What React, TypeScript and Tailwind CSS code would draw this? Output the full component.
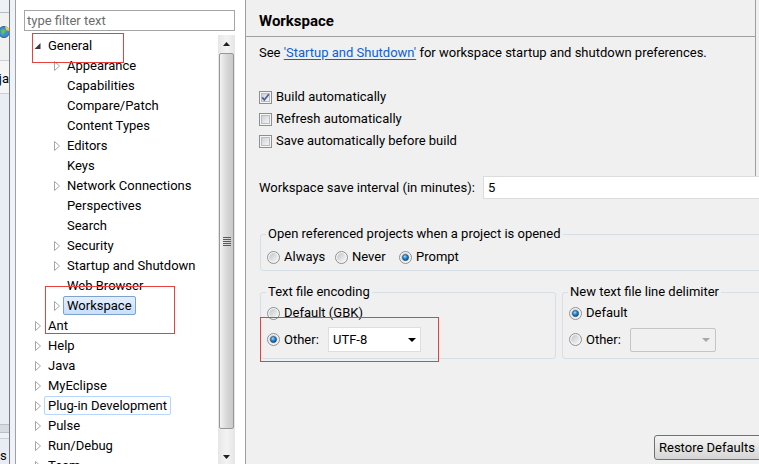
import React from "react";

type TreeNode = {
  label: string;
  depth: 0 | 1;
  arrow: "none" | "closed" | "open";
  state?: "selected" | "focus";
};

const tree: TreeNode[] = [
  { label: "General", depth: 0, arrow: "open" },
  { label: "Appearance", depth: 1, arrow: "closed" },
  { label: "Capabilities", depth: 1, arrow: "none" },
  { label: "Compare/Patch", depth: 1, arrow: "none" },
  { label: "Content Types", depth: 1, arrow: "none" },
  { label: "Editors", depth: 1, arrow: "closed" },
  { label: "Keys", depth: 1, arrow: "none" },
  { label: "Network Connections", depth: 1, arrow: "closed" },
  { label: "Perspectives", depth: 1, arrow: "none" },
  { label: "Search", depth: 1, arrow: "none" },
  { label: "Security", depth: 1, arrow: "closed" },
  { label: "Startup and Shutdown", depth: 1, arrow: "closed" },
  { label: "Web Browser", depth: 1, arrow: "none" },
  { label: "Workspace", depth: 1, arrow: "closed", state: "selected" },
  { label: "Ant", depth: 0, arrow: "closed" },
  { label: "Help", depth: 0, arrow: "closed" },
  { label: "Java", depth: 0, arrow: "closed" },
  { label: "MyEclipse", depth: 0, arrow: "closed" },
  { label: "Plug-in Development", depth: 0, arrow: "closed", state: "focus" },
  { label: "Pulse", depth: 0, arrow: "closed" },
  { label: "Run/Debug", depth: 0, arrow: "closed" },
  { label: "Team", depth: 0, arrow: "closed" },
];

function Arrow({ kind }: { kind: TreeNode["arrow"] }) {
  return (
    <span className="h-[20px] w-[13px] shrink-0">
      {kind === "closed" && (
        <svg width="13" height="20" viewBox="0 0 13 20">
          <path d="M4.5 6.5 L9.5 11 L4.5 15.5 Z" fill="#fff" stroke="#a6a6a6" />
        </svg>
      )}
      {kind === "open" && (
        <svg width="13" height="20" viewBox="0 0 13 20">
          <path d="M9.5 8 L9.5 14 L3.5 14 Z" fill="#3a3a3a" />
        </svg>
      )}
    </span>
  );
}

function TreeRow({ node }: { node: TreeNode }) {
  const label =
    node.state === "selected"
      ? "border-[#7da2ce] bg-gradient-to-b from-[#e4effd] to-[#c8dffc]"
      : node.state === "focus"
        ? "border-[#b8d6fb] bg-[#fbfdff]"
        : "border-transparent";
  return (
    <div className={`flex h-[20px] shrink-0 items-center ${node.depth === 0 ? "pl-[15px]" : "pl-[34px]"}`}>
      <Arrow kind={node.arrow} />
      <span className={`h-[19px] whitespace-nowrap rounded-[2px] border px-[3px] leading-[17px] ${label}`}>
        {node.label}
      </span>
    </div>
  );
}

function Scrollbar() {
  return (
    <div className="flex w-[17px] shrink-0 flex-col bg-gradient-to-r from-[#e6e6e6] via-[#f3f3f3] to-[#e6e6e6]">
      <div className="flex h-[18px] items-center justify-center">
        <svg width="7" height="4" viewBox="0 0 7 4">
          <path d="M0 4 L3.5 0 L7 4 Z" fill="#202020" />
        </svg>
      </div>
      <div className="mx-[1px] flex h-[376px] items-center justify-center rounded-[2px] border border-[#979797] bg-gradient-to-r from-[#f2f2f2] via-[#d9d9d9] to-[#c9c9c9]">
        <svg width="8" height="9" viewBox="0 0 8 9">
          <path d="M0 0.5 H8 M0 2.5 H8 M0 4.5 H8 M0 6.5 H8 M0 8.5 H8" stroke="#5a5a5a" strokeWidth="1" />
        </svg>
      </div>
      <div className="flex flex-1 items-end justify-center pb-[5px]">
        <svg width="7" height="4" viewBox="0 0 7 4">
          <path d="M0 0 L7 0 L3.5 4 Z" fill="#202020" />
        </svg>
      </div>
    </div>
  );
}

function Check({ on }: { on?: boolean }) {
  return (
    <svg width="13" height="13" viewBox="0 0 13 13" className="shrink-0">
      <defs>
        <linearGradient id="cbfill" x1="0" y1="0" x2="1" y2="1">
          <stop offset="0" stopColor="#cbcfd5" />
          <stop offset="1" stopColor="#f7f7f7" />
        </linearGradient>
      </defs>
      <rect x="0.5" y="0.5" width="12" height="12" fill="#f6f6f6" stroke="#8e8f8f" />
      <rect x="2.5" y="2.5" width="8" height="8" fill="url(#cbfill)" stroke="#b9bdc3" />
      {on && <path d="M3.2 6.4 L5.3 9 L9.8 3.2" fill="none" stroke="#4a5f97" strokeWidth="1.7" />}
    </svg>
  );
}

function Radio({ on }: { on?: boolean }) {
  return (
    <svg width="13" height="13" viewBox="0 0 13 13" className="shrink-0">
      <defs>
        <linearGradient id="rdfill" x1="0" y1="0" x2="1" y2="1">
          <stop offset="0" stopColor="#c2c6cc" />
          <stop offset="1" stopColor="#f7f7f7" />
        </linearGradient>
        <radialGradient id="rddot" cx="0.4" cy="0.35" r="0.75">
          <stop offset="0" stopColor="#9fe0ff" />
          <stop offset="0.45" stopColor="#1d86d6" />
          <stop offset="1" stopColor="#0b3f78" />
        </radialGradient>
      </defs>
      <circle cx="6.5" cy="6.5" r="6" fill="#f4f4f4" stroke="#8e8f8f" />
      <circle cx="6.5" cy="6.5" r="4.4" fill="url(#rdfill)" />
      {on && <circle cx="6.5" cy="6.5" r="3.1" fill="url(#rddot)" stroke="#1f3f66" strokeWidth="0.6" />}
    </svg>
  );
}

function RadioItem({ label, on, className = "" }: { label: string; on?: boolean; className?: string }) {
  return (
    <div className={`flex items-center ${className}`}>
      <span className="ml-[1px] flex">
        <Radio on={on} />
      </span>
      <span className="ml-[4px] whitespace-nowrap leading-[16px]">{label}</span>
    </div>
  );
}

function CheckRow({ label, on }: { label: string; on?: boolean }) {
  return (
    <div className="flex h-[22px] items-center pl-[13px]">
      <Check on={on} />
      <span className="ml-[4px] leading-[16px]">{label}</span>
    </div>
  );
}

function LeftStrip() {
  return (
    <div className="flex w-[9px] shrink-0 flex-col overflow-hidden bg-[#e8edf3]">
      <div className="h-[13px] shrink-0 border-b border-[#b5bec8] bg-[#eef1f5]" />
      <div className="h-[48px] shrink-0 border-b border-[#c9d0d8] bg-[#f1f1f1] pt-[12px]">
        <svg width="9" height="14" viewBox="0 0 9 14">
          <circle cx="4" cy="7" r="5.5" fill="#3d8fd1" stroke="#2a5f8f" />
          <path d="M1 5 Q4 3 6 6 Q4 9 2 10 Z" fill="#6cbf4a" />
          <path d="M5 1 L9 3 L9 6 L6 5 Z" fill="#f2c94c" />
        </svg>
      </div>
      <div className="flex h-[33px] shrink-0 items-center justify-end border-b border-[#c9d0d8] bg-[#f5f5f5] pt-[3px]">
        <span className="whitespace-nowrap leading-[16px]">ja</span>
      </div>
      <div className="flex-1" />
      <div className="h-[9px] shrink-0 border-y border-[#b9c0c8] bg-[#d6dbe1]" />
      <div className="h-[5px] shrink-0 bg-[#eef1f4]" />
      <div className="flex h-[26px] shrink-0 items-end border-t border-[#c9d0d8] pb-[1px]">
        <span className="leading-[14px]">s</span>
      </div>
    </div>
  );
}

export default function App() {
  return (
    <div className="relative flex h-[464px] w-[759px] overflow-hidden bg-[#f0f0f0] font-['Roboto',sans-serif] text-[13px] text-black">
      <LeftStrip />
      <div className="w-[1px] shrink-0 bg-[#7a7a7a]" />
      <div className="w-[5px] shrink-0 bg-[#eef3f9]" />
      <div className="w-[1px] shrink-0 bg-[#a0a0a0]" />

      {/* preference tree */}
      <div className="flex w-[229px] shrink-0 flex-col bg-white">
        <div className="ml-[8px] mt-[10px] h-[21px] w-[211px] shrink-0 border border-[#a5a5a5] pl-[2px] leading-[19px] text-[#6d6d6d]">
          type filter text
        </div>
        <div className="mt-[4px] flex min-h-0 flex-1">
          <div className="flex min-w-0 flex-1 flex-col overflow-hidden">
            {tree.map((n) => (
              <TreeRow key={n.label} node={n} />
            ))}
          </div>
          <Scrollbar />
          <div className="w-[10px] shrink-0" />
        </div>
      </div>
      <div className="w-[1px] shrink-0 bg-[#a0a0a0]" />

      {/* page */}
      <div className="flex min-w-0 flex-1 flex-col overflow-hidden">
        <div className="flex h-[176px] w-[510px] shrink-0 flex-col border-r border-[#a0a0a0]">
          <div className="h-[37px] shrink-0 border-b border-[#a0a0a0] pl-[13px] pt-[11px] text-[15px] font-bold leading-[20px]">
            Workspace
          </div>
          <div className="mt-[8px] whitespace-nowrap pl-[13px] leading-[16px]">
            See{" "}
            <span className="text-[#0b62d6] underline underline-offset-2">'Startup and Shutdown'</span> for
            workspace startup and shutdown preferences.
          </div>
          <div className="mt-[25px]">
            <CheckRow label="Build automatically" on />
            <CheckRow label="Refresh automatically" />
            <CheckRow label="Save automatically before build" />
          </div>
        </div>

        <div className="flex h-[23px] w-[520px] shrink-0 items-center pl-[13px]">
          <span className="whitespace-nowrap leading-[16px]">Workspace save interval (in minutes):</span>
          <div className="ml-[8px] h-[23px] flex-1 border border-[#dcdcdc] bg-white pl-[4px] leading-[21px]">5</div>
        </div>

        <fieldset className="ml-[14px] mt-[27px] w-[510px] shrink-0 rounded-[3px] border border-[#d5dfe5] px-[5px] pb-[5px] pt-[7px]">
          <legend className="px-[2px] leading-[16px]">Open referenced projects when a project is opened</legend>
          <div className="flex h-[16px] items-center">
            <RadioItem label="Always" className="w-[68px]" />
            <RadioItem label="Never" className="w-[64px]" />
            <RadioItem label="Prompt" on />
          </div>
        </fieldset>

        <div className="ml-[14px] mt-[13px] flex w-[530px] shrink-0 gap-[6px]">
          <fieldset className="w-[296px] shrink-0 rounded-[3px] border border-[#d5dfe5] px-[5px] pb-[6px] pt-[5px]">
            <legend className="px-[2px] leading-[16px]">Text file encoding</legend>
            <div className="flex h-[16px] items-center">
              <RadioItem label="Default (GBK)" />
            </div>
            <div className="mt-[6px] flex h-[25px] items-center">
              <RadioItem label="Other:" on className="w-[62px]" />
              <div className="flex h-[25px] w-[93px] items-center justify-between border border-[#dedede] bg-white pl-[4px] pr-[4px]">
                <span className="leading-[16px]">UTF-8</span>
                <svg width="8" height="4" viewBox="0 0 8 4">
                  <path d="M0 0 L8 0 L4 4 Z" fill="#000" />
                </svg>
              </div>
            </div>
          </fieldset>
          <fieldset className="w-[228px] shrink-0 rounded-[3px] border border-[#d5dfe5] px-[5px] pb-[6px] pt-[5px]">
            <legend className="px-[2px] leading-[16px]">New text file line delimiter</legend>
            <div className="flex h-[16px] items-center">
              <RadioItem label="Default" on />
            </div>
            <div className="mt-[6px] flex h-[25px] items-center">
              <RadioItem label="Other:" className="w-[62px]" />
              <div className="flex h-[24px] w-[86px] items-center justify-end rounded-[2px] border border-[#c5c5c5] bg-[#f0f0f0] pr-[5px]">
                <svg width="8" height="4" viewBox="0 0 8 4">
                  <path d="M0 0 L8 0 L4 4 Z" fill="#a8a8a8" />
                </svg>
              </div>
            </div>
          </fieldset>
        </div>

        <button className="mb-[4px] ml-[408px] mt-auto h-[25px] w-[110px] shrink-0 rounded-[3px] border border-[#707070] bg-gradient-to-b from-[#f4f4f4] via-[#e6e6e6] to-[#d5d5d5] pl-[4px] text-left leading-[16px]">
          Restore Defaults
        </button>
      </div>

      {/* red annotation boxes */}
      <div className="absolute left-[32px] top-[33px] h-[30px] w-[92px] border border-[#e8403c]" />
      <div className="absolute left-[45px] top-[286px] h-[48px] w-[130px] border border-[#e8403c]" />
      <div className="absolute left-[260px] top-[317px] h-[45px] w-[179px] border border-[#e8403c]" />
    </div>
  );
}
